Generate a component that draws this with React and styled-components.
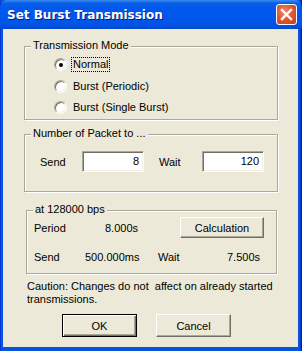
import styled, { createGlobalStyle } from 'styled-components';

const Global = createGlobalStyle`
  html, body { margin: 0; padding: 0; background: #ECE9D8; }
  * { box-sizing: border-box; }
`;

export default function App() {
  return (
    <>
      <Global />
      <Window>
        <TitleBar>
          <Title>Set Burst Transmission</Title>
          <CloseButton>
            <svg width="13" height="13" viewBox="0 0 13 13">
              <path d="M2 2 L11 11 M11 2 L2 11" stroke="#fff" strokeWidth="2.4" strokeLinecap="square" />
            </svg>
          </CloseButton>
        </TitleBar>
        <Client>
          <Group $top={17} $left={21} $width={254} $height={74}>
            <Caption>Transmission Mode</Caption>
            <RadioList>
              <RadioRow>
                <Radio $checked />
                <RadioText $focus>Normal</RadioText>
              </RadioRow>
              <RadioRow>
                <Radio />
                <RadioText>Burst (Periodic)</RadioText>
              </RadioRow>
              <RadioRow>
                <Radio />
                <RadioText>Burst (Single Burst)</RadioText>
              </RadioRow>
            </RadioList>
          </Group>

          <Group $top={14} $left={21} $width={254} $height={58}>
            <Caption>Number of Packet to ...</Caption>
            <FieldRow>
              <FieldLabel $w={42}>Send</FieldLabel>
              <Input>8</Input>
              <FieldLabel $w={43} $ml={15}>Wait</FieldLabel>
              <Input>120</Input>
            </FieldRow>
          </Group>

          <Group $top={18} $left={23} $width={251} $height={64}>
            <Caption>at 128000 bps</Caption>
            <ResultGrid>
              <Cell>Period</Cell>
              <Cell $right>8.000s</Cell>
              <Cell />
              <Button $w={84} $h={21}>Calculation</Button>
              <Cell>Send</Cell>
              <Cell $right>500.000ms</Cell>
              <Cell $pl={20}>Wait</Cell>
              <Cell $right $pr={4}>7.500s</Cell>
            </ResultGrid>
          </Group>

          <Caution>{'Caution: Changes do not  affect on already started'}<br />transmissions.</Caution>

          <ButtonRow>
            <Button $w={75} $h={23} $default>OK</Button>
            <Button $w={75} $h={23}>Cancel</Button>
          </ButtonRow>
        </Client>
      </Window>
    </>
  );
}

const Window = styled.div`
  width: 302px;
  height: 351px;
  display: flex;
  flex-direction: column;
  background: linear-gradient(90deg, #0019CF 0px, #0855DD 1px, #0855DD 300px, #0019CF 301px);
  font-family: 'Liberation Sans', Arial, sans-serif;
  font-size: 11px;
  color: #000;
`;

const TitleBar = styled.div`
  height: 29px;
  flex: none;
  display: flex;
  align-items: center;
  justify-content: space-between;
  padding: 0 5px 0 7px;
  border-radius: 7px 7px 0 0;
  background: linear-gradient(180deg, #3C8EF3 0px, #0A5FE6 3px, #0058EE 8px, #0056EB 20px, #0152E0 26px, #0046C8 29px);
`;

const Title = styled.div`
  font-family: 'DejaVu Sans', sans-serif;
  font-weight: bold;
  font-size: 12px;
  color: #fff;
  text-shadow: 1px 1px 0 #0A1A80;
`;

const CloseButton = styled.div`
  width: 21px;
  height: 21px;
  border: 1px solid #fff;
  border-radius: 3px;
  display: flex;
  align-items: center;
  justify-content: center;
  background: radial-gradient(circle at 40% 35%, #EE8A6E 0%, #E15A37 45%, #C6391A 100%);
`;

const Client = styled.div`
  flex: 1;
  margin: 0 4px 4px 3px;
  background: #ECE9D8;
  display: flex;
  flex-direction: column;
  align-items: flex-start;
`;

const Group = styled.div`
  position: relative;
  margin-top: ${p => p.$top}px;
  margin-left: ${p => p.$left}px;
  width: ${p => p.$width}px;
  height: ${p => p.$height}px;
  flex: none;
  border: 1px solid #ACA899;
  box-shadow: inset 1px 1px 0 #fff, 1px 1px 0 #fff;
`;

const Caption = styled.span`
  position: absolute;
  top: -8px;
  left: 6px;
  padding: 0 2px;
  line-height: 13px;
  background: #ECE9D8;
  white-space: nowrap;
`;

const RadioList = styled.div`
  display: flex;
  flex-direction: column;
  padding: 7px 0 0 29px;
`;

const RadioRow = styled.div`
  height: 21.5px;
  display: flex;
  align-items: center;
  gap: 4px;
`;

const Radio = styled.span`
  position: relative;
  width: 13px;
  height: 13px;
  border-radius: 50%;
  background: #fff;
  border: 1px solid;
  border-color: #ACA899 #fff #fff #ACA899;
  box-shadow: inset 1px 1px 0 #716F64, inset -1px -1px 0 #F1EFE2;
  &::after {
    content: '';
    display: ${p => (p.$checked ? 'block' : 'none')};
    position: absolute;
    left: 3.5px;
    top: 3.5px;
    width: 4px;
    height: 4px;
    border-radius: 50%;
    background: #000;
  }
`;

const RadioText = styled.span`
  line-height: 13px;
  padding: 0 1px;
  border: 1px dotted ${p => (p.$focus ? '#000' : 'transparent')};
`;

const FieldRow = styled.div`
  display: flex;
  align-items: center;
  padding: 16px 0 0 15px;
`;

const FieldLabel = styled.span`
  width: ${p => p.$w}px;
  margin-left: ${p => p.$ml || 0}px;
`;

const Input = styled.div`
  width: 62px;
  height: 21px;
  background: #fff;
  border: 1px solid;
  border-color: #ACA899 #fff #fff #ACA899;
  box-shadow: inset 1px 1px 0 #716F64, inset -1px -1px 0 #F1EFE2;
  text-align: right;
  padding: 2px 4px 0 0;
  line-height: 14px;
`;

const ResultGrid = styled.div`
  display: grid;
  grid-template-columns: 51px 53px 42px 84px;
  grid-template-rows: 21px 21px;
  row-gap: 8px;
  align-items: center;
  padding: 6px 0 0 7px;
`;

const Cell = styled.span`
  text-align: ${p => (p.$right ? 'right' : 'left')};
  padding-left: ${p => p.$pl || 0}px;
  padding-right: ${p => p.$pr || 0}px;
  white-space: nowrap;
`;

const Button = styled.div`
  width: ${p => p.$w}px;
  height: ${p => p.$h}px;
  display: flex;
  align-items: center;
  justify-content: center;
  background: #ECE9D8;
  border: 1px solid;
  border-color: ${p => (p.$default ? '#000' : '#fff #716F64 #716F64 #fff')};
  box-shadow: ${p => (p.$default
    ? 'inset 1px 1px 0 #fff, inset -1px -1px 0 #716F64, inset -2px -2px 0 #ACA899'
    : 'inset -1px -1px 0 #ACA899')};
`;

const Caution = styled.div`
  margin: 6px 0 0 24px;
  line-height: 13px;
  white-space: pre;
`;

const ButtonRow = styled.div`
  display: flex;
  gap: 19px;
  margin: 8px 0 0 59px;
`;
